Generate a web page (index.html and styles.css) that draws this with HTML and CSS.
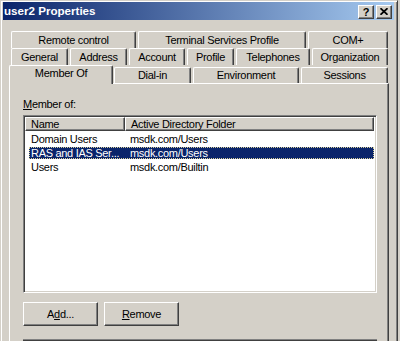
FILE: index.html
```html
<!DOCTYPE html>
<html>
<head>
<meta charset="utf-8">
<link rel="stylesheet" href="styles.css">
</head>
<body>
<div class="window">
  <div class="titlebar">
    <span class="title">user2 Properties</span>
    <div class="caption-btns">
      <span class="cbtn help">?</span>
      <span class="cbtn close"><svg width="8" height="7" viewBox="0 0 8 7"><path d="M0.5 0.2 L7.5 6.8 M7.5 0.2 L0.5 6.8" stroke="#000" stroke-width="1.7" fill="none"/></svg></span>
    </div>
  </div>
  <div class="dlg">
    <div class="tabrow back">
      <div class="tab w-remote">Remote control</div>
      <div class="tab w-terminal">Terminal Services Profile</div>
      <div class="tab w-com">COM+</div>
    </div>
    <div class="tabrow back">
      <div class="tab w-general">General</div>
      <div class="tab w-address">Address</div>
      <div class="tab w-account">Account</div>
      <div class="tab w-profile">Profile</div>
      <div class="tab w-tel">Telephones</div>
      <div class="tab w-org">Organization</div>
    </div>
    <div class="tabrow front">
      <div class="tab sel w-member">Member Of</div>
      <div class="tab w-dial">Dial-in</div>
      <div class="tab w-env">Environment</div>
      <div class="tab w-sess">Sessions</div>
    </div>
    <div class="panel">
      <div class="label"><u>M</u>ember of:</div>
      <div class="listbox">
        <div class="lv-header">
          <div class="hcell h1">Name</div>
          <div class="hcell h2">Active Directory Folder</div>
        </div>
        <div class="lv-row"><span class="c1">Domain Users</span><span class="c2">msdk.com/Users</span></div>
        <div class="lv-row selected"><span class="c1">RAS and IAS Ser...</span><span class="c2">msdk.com/Users</span></div>
        <div class="lv-row"><span class="c1">Users</span><span class="c2">msdk.com/Builtin</span></div>
      </div>
      <div class="buttons">
        <div class="btn">A<u>d</u>d...</div>
        <div class="btn"><u>R</u>emove</div>
      </div>
      <div class="next-box"></div>
    </div>
  </div>
</div>
</body>
</html>
```

FILE: styles.css
```css
html, body {
  margin: 0;
  padding: 0;
  background: #d4d0c8;
}
body {
  font-family: "Liberation Sans", Arial, sans-serif;
  font-size: 11px;
  letter-spacing: -0.3px;
  color: #000;
}
.window {
  box-sizing: border-box;
  width: 398px;
  height: 341px;
  overflow: hidden;
  background: #d4d0c8;
  border-left: 1px solid #d4d0c8;
  border-top: 1px solid #d4d0c8;
  border-right: 1px solid #404040;
  box-shadow: inset 1px 1px #fff, inset -1px 0 #808080;
  padding: 1px 3px 0 2px;
}
.titlebar {
  height: 18px;
  display: flex;
  justify-content: space-between;
  align-items: flex-start;
  background: linear-gradient(to right, #0a246a, #a6caf0);
}
.title {
  color: #fff;
  font-weight: bold;
  font-size: 11.6px;
  letter-spacing: 0;
  line-height: 18px;
  padding-left: 1px;
}
.caption-btns {
  display: flex;
  gap: 2px;
  margin-top: 3px;
  margin-right: 2px;
}
.cbtn {
  box-sizing: border-box;
  width: 16px;
  height: 14px;
  background: #d4d0c8;
  border: 1px solid;
  border-color: #fff #404040 #404040 #fff;
  box-shadow: inset -1px -1px #808080;
  display: flex;
  align-items: center;
  justify-content: center;
}
.help {
  font-weight: bold;
  font-size: 11px;
  line-height: 12px;
  letter-spacing: 0;
  padding-bottom: 1px;
}
.close svg {
  display: block;
  margin-bottom: 1px;
}
.dlg {
  padding: 11px 5px 0 6px;
}
.tabrow {
  display: flex;
  height: 17px;
}
.tabrow.back {
  padding-left: 2px;
}
.tabrow.front {
  height: 18px;
  position: relative;
  z-index: 1;
}
.tab {
  box-sizing: border-box;
  height: 17px;
  margin-right: 2px;
  border-top: 1px solid #fff;
  border-left: 1px solid #fff;
  border-right: 1px solid #404040;
  box-shadow: inset -1px 0 #808080;
  border-radius: 2px 2px 0 0;
  text-align: center;
  white-space: nowrap;
  padding-top: 2px;
  line-height: 13px;
  background: #d4d0c8;
}
.front .tab {
  height: 16px;
  margin-top: 2px;
  padding-top: 1px;
}
.front .tab.sel {
  height: 19px;
  margin-top: 0;
  margin-right: 1px;
}
.w-remote { width: 125px; }
.w-terminal { width: 168px; }
.w-com { width: 80px; margin-right: 0; }
.w-general { width: 57px; }
.w-address { width: 57px; }
.w-account { width: 56px; }
.w-profile { width: 47px; }
.w-tel { width: 74px; }
.w-org { width: 76px; margin-right: 0; }
.w-member { width: 104px; }
.w-dial { width: 77px; }
.w-env { width: 106px; }
.w-sess { width: 87px; margin-right: 0; }

.panel {
  box-sizing: border-box;
  height: 300px;
  border-top: 1px solid #fff;
  border-left: 1px solid #fff;
  border-right: 1px solid #404040;
  box-shadow: inset -1px 0 #808080;
  padding: 14px 0 0 13px;
}
.label {
  line-height: 13px;
  height: 13px;
  margin-bottom: 4px;
}
.listbox {
  box-sizing: border-box;
  width: 354px;
  height: 178px;
  background: #fff;
  border: 1px solid;
  border-color: #808080 #fff #fff #808080;
  box-shadow: inset 1px 1px #404040, inset -1px -1px #d4d0c8;
  padding: 1px 2px 1px 1px;
}
.lv-header {
  display: flex;
  height: 14px;
  margin-bottom: 1px;
}
.hcell {
  box-sizing: border-box;
  height: 14px;
  background: #d4d0c8;
  border: 1px solid;
  border-color: #fff #404040 #404040 #fff;
  box-shadow: inset -1px -1px #808080;
  line-height: 12px;
  padding-left: 5px;
  white-space: nowrap;
}
.h1 { width: 100px; }
.h2 { flex: 1; }
.lv-row {
  display: flex;
  height: 14px;
  line-height: 14px;
  margin-left: 4px;
  white-space: nowrap;
}
.lv-row .c1 {
  width: 96px;
  box-sizing: border-box;
  padding-left: 2px;
}
.lv-row .c2 {
  padding-left: 5px;
}
.lv-row.selected {
  height: 12px;
  line-height: 12px;
  margin-top: 1px;
  margin-bottom: 1px;
  background: #0a246a;
  color: #fff;
  outline: 1px dotted #d8cf9a;
  outline-offset: -1px;
}
.buttons {
  display: flex;
  gap: 6px;
  margin-top: 9px;
}
.btn {
  box-sizing: border-box;
  width: 75px;
  height: 24px;
  background: #d4d0c8;
  border: 1px solid;
  border-color: #fff #404040 #404040 #fff;
  box-shadow: inset -1px -1px #808080;
  text-align: center;
  line-height: 22px;
}
.next-box {
  margin-top: 13px;
  width: 354px;
  height: 10px;
  border-top: 1px solid #808080;
  box-shadow: inset 0 1px #404040;
}
```
